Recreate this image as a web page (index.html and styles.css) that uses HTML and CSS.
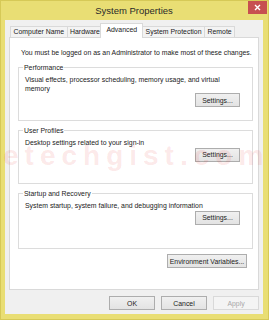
FILE: index.html
```html
<!doctype html>
<html lang="en">
<head>
    <meta charset="UTF-8">
    <title>System Properties</title>
    <link rel="stylesheet" href="styles.css">
</head>
<body>

<div class="window">
    <div class="titlebar">
        <span class="title">System Properties</span>
        <button class="close" title="Close">
            <svg width="7" height="7" viewBox="0 0 7 7"><path d="M1 1L6 6M6 1L1 6" stroke="#fff" stroke-width="1.4"/></svg>
        </button>
    </div>

    <div class="client">
        <div class="tabs">
            <div class="tab">Computer Name</div>
            <div class="tab">Hardware</div>
            <div class="tab active">Advanced</div>
            <div class="tab">System Protection</div>
            <div class="tab">Remote</div>
        </div>

        <div class="panel">
            <p class="note">You must be logged on as an Administrator to make most of these changes.</p>

            <fieldset class="group">
                <legend>Performance</legend>
                <p>Visual effects, processor scheduling, memory usage, and virtual memory</p>
                <button class="btn">Settings...</button>
            </fieldset>

            <fieldset class="group">
                <legend>User Profiles</legend>
                <p>Desktop settings related to your sign-in</p>
                <button class="btn">Settings...</button>
            </fieldset>

            <fieldset class="group last">
                <legend>Startup and Recovery</legend>
                <p>System startup, system failure, and debugging information</p>
                <button class="btn">Settings...</button>
            </fieldset>

            <div class="env-row">
                <button class="btn env">Environment Variables...</button>
            </div>
        </div>

        <div class="footer">
            <button class="btn">OK</button>
            <button class="btn">Cancel</button>
            <button class="btn" disabled>Apply</button>
        </div>
    </div>

    <div class="watermark">etechgist.com</div>
</div>

</body>
</html>
```

FILE: styles.css
```css
* {
    box-sizing: border-box;
}

body {
    margin: 0;
    font-family: "Liberation Sans", Arial, sans-serif;
    font-size: 6.9px;
    color: #222;
}

.window {
    position: relative;
    width: 269px;
    height: 320px;
    background: #e9de74;
    border: 1px solid #d6c957;
    padding: 0 5px 5px 4px;
    display: flex;
    flex-direction: column;
    overflow: hidden;
}

.titlebar {
    height: 19px;
    display: grid;
    grid-template-columns: 1fr auto 1fr;
}

.title {
    grid-column: 2;
    align-self: center;
    font-size: 9.5px;
    color: #2a2a2a;
}

.close {
    grid-column: 3;
    justify-self: end;
    width: 19px;
    height: 13px;
    margin-right: -4px;
    padding: 0;
    border: 0;
    background: #c75050;
    display: flex;
    align-items: center;
    justify-content: center;
}

.client {
    flex: 1;
    background: #f0f0f0;
    padding: 3px 4px 4px;
    display: flex;
    flex-direction: column;
}

/* tabs */
.tabs {
    height: 14px;
    display: flex;
    align-items: flex-end;
    padding-left: 1px;
}

.tab {
    height: 11px;
    line-height: 10px;
    padding: 0 2.5px;
    background: #f3f3f3;
    border: 1px solid #d9d9d9;
    border-bottom: 0;
    margin-right: -1px;
    white-space: nowrap;
}

.tab.active {
    position: relative;
    z-index: 1;
    height: 15px;
    line-height: 12px;
    margin: 0 -1px -1px -2px;
    padding: 0 5px;
    background: #fff;
}

.panel {
    height: 253px;
    background: #fff;
    border: 1px solid #d9d9d9;
    padding: 10px 5px 0 8px;
    display: flex;
    flex-direction: column;
}

.note {
    margin: 0 0 0 3px;
    line-height: 9px;
    white-space: nowrap;
}

.group {
    margin: 6px 0 0;
    height: 58px;
    border: 1px solid #dcdcdc;
    padding: 4px 12px 7px 6px;
    display: flex;
    flex-direction: column;
}

.group + .group {
    margin-top: 5px;
}

.group.last {
    height: 60px;
}

.group legend {
    line-height: 9px;
    padding: 0 1px;
    margin-left: -2px;
}

.group p {
    margin: 0;
    line-height: 8.5px;
    max-width: 205px;
}

.group .btn {
    margin-top: auto;
    align-self: flex-end;
}

/* buttons */
.btn {
    height: 14px;
    width: 45px;
    padding: 0;
    font: inherit;
    color: #222;
    white-space: nowrap;
    background: linear-gradient(#f0f0f0, #e3e3e3);
    border: 1px solid #adadad;
}

.btn:disabled {
    color: #a8a8a8;
    background: #f4f4f4;
    border-color: #d9d9d9;
}

.env-row {
    margin-top: 5px;
    padding-right: 6px;
    display: flex;
    justify-content: flex-end;
}

.btn.env {
    width: 80px;
}

.footer {
    margin-top: 6px;
    display: flex;
    justify-content: flex-end;
    gap: 6px;
}

.footer .btn {
    width: 46px;
}

.watermark {
    position: absolute;
    left: 2px;
    top: 139px;
    font-size: 28px;
    font-weight: bold;
    letter-spacing: 6px;
    color: rgba(230, 40, 40, 0.11);
    pointer-events: none;
}
```
